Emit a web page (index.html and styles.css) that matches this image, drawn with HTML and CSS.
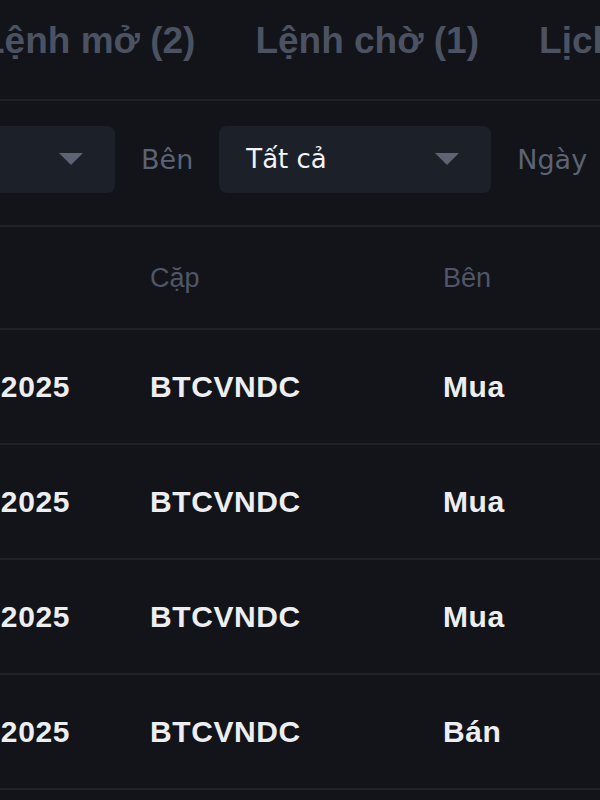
FILE: index.html
```html
<!DOCTYPE html>
<html lang="vi">
<head>
  <meta charset="UTF-8" />
  <meta name="viewport" content="width=device-width, initial-scale=1.0"/>
  <title>Lệnh</title>
  <link rel="stylesheet" href="styles.css">
</head>
<body>
  <div class="page">

    <!-- Tabs -->
    <nav class="tabs">
      <div class="tab">Lệnh mở (2)</div>
      <div class="tab">Lệnh chờ (1)</div>
      <div class="tab">Lịch sử lệnh</div>
    </nav>

    <!-- Bo loc -->
    <div class="filters">
      <div class="select select-first">
        <span class="select-text">Tất cả</span>
        <span class="caret"></span>
      </div>
      <span class="filter-label">Bên</span>
      <div class="select">
        <span class="select-text">Tất cả</span>
        <span class="caret"></span>
      </div>
      <span class="filter-label">Ngày</span>
    </div>

    <!-- Bang lenh -->
    <div class="table">
      <div class="row head">
        <div class="cell">Ngày</div>
        <div class="cell">Cặp</div>
        <div class="cell">Bên</div>
      </div>
      <div class="row">
        <div class="cell">12 thg 5, 2025</div>
        <div class="cell">BTCVNDC</div>
        <div class="cell">Mua</div>
      </div>
      <div class="row">
        <div class="cell">12 thg 5, 2025</div>
        <div class="cell">BTCVNDC</div>
        <div class="cell">Mua</div>
      </div>
      <div class="row">
        <div class="cell">11 thg 5, 2025</div>
        <div class="cell">BTCVNDC</div>
        <div class="cell">Mua</div>
      </div>
      <div class="row">
        <div class="cell">10 thg 5, 2025</div>
        <div class="cell">BTCVNDC</div>
        <div class="cell">Bán</div>
      </div>
      <div class="row">
        <div class="cell">09 thg 5, 2025</div>
        <div class="cell">BTCVNDC</div>
        <div class="cell">Bán</div>
      </div>
    </div>

  </div>
</body>
</html>
```

FILE: styles.css
```css
body {
  margin: 0;
  font-family: "Liberation Sans", Arial, sans-serif;
  background: #121419;
  overflow: hidden;
}

.page {
  margin-left: -160px;
  width: 900px;
}

.tabs {
  display: flex;
  gap: 60px;
  align-items: center;
  padding-left: 142px;
  border-bottom: 2px solid #1e222b;
  box-sizing: border-box;
  height: 101px;
}

.tab {
  font-size: 37px;
  font-weight: bold;
  color: #4b5262;
  white-space: nowrap;
  margin-top: -18px;
}

.filters {
  display: flex;
  align-items: center;
  gap: 26px;
  height: 126px;
  border-bottom: 2px solid #1e222b;
  box-sizing: border-box;
  padding-bottom: 8px;
}

.select {
  width: 272px;
  height: 67px;
  background-color: #1c2029;
  border-radius: 8px;
  display: flex;
  align-items: center;
  justify-content: space-between;
  padding: 0 32px 0 27px;
  box-sizing: border-box;
}

.select-first {
  width: 275px;
}

.select-first .select-text {
  visibility: hidden;
}

.select-text {
  font-family: "DejaVu Sans", sans-serif;
  font-size: 26px;
  color: #f1f3f5;
}

.caret {
  width: 0;
  height: 0;
  border-left: 12px solid transparent;
  border-right: 12px solid transparent;
  border-top: 12px solid #5d6473;
}

.filter-label {
  font-family: "DejaVu Sans", sans-serif;
  font-size: 27px;
  color: #5c6374;
}

.row {
  display: grid;
  grid-template-columns: 310px 293px 1fr;
  height: 115px;
  box-sizing: border-box;
  align-items: center;
  border-bottom: 2px solid #1e222b;
}

.row.head {
  height: 103px;
  padding-top: 2px;
}

.cell {
  font-size: 30px;
  font-weight: bold;
  letter-spacing: 0.6px;
  color: #eceef1;
  white-space: nowrap;
}

.row .cell:first-child {
  text-align: right;
  padding-right: 80px;
}

.head .cell {
  font-size: 27px;
  font-weight: normal;
  letter-spacing: 0;
  color: #4f5667;
}

.head .cell:first-child {
  text-align: left;
}
```
